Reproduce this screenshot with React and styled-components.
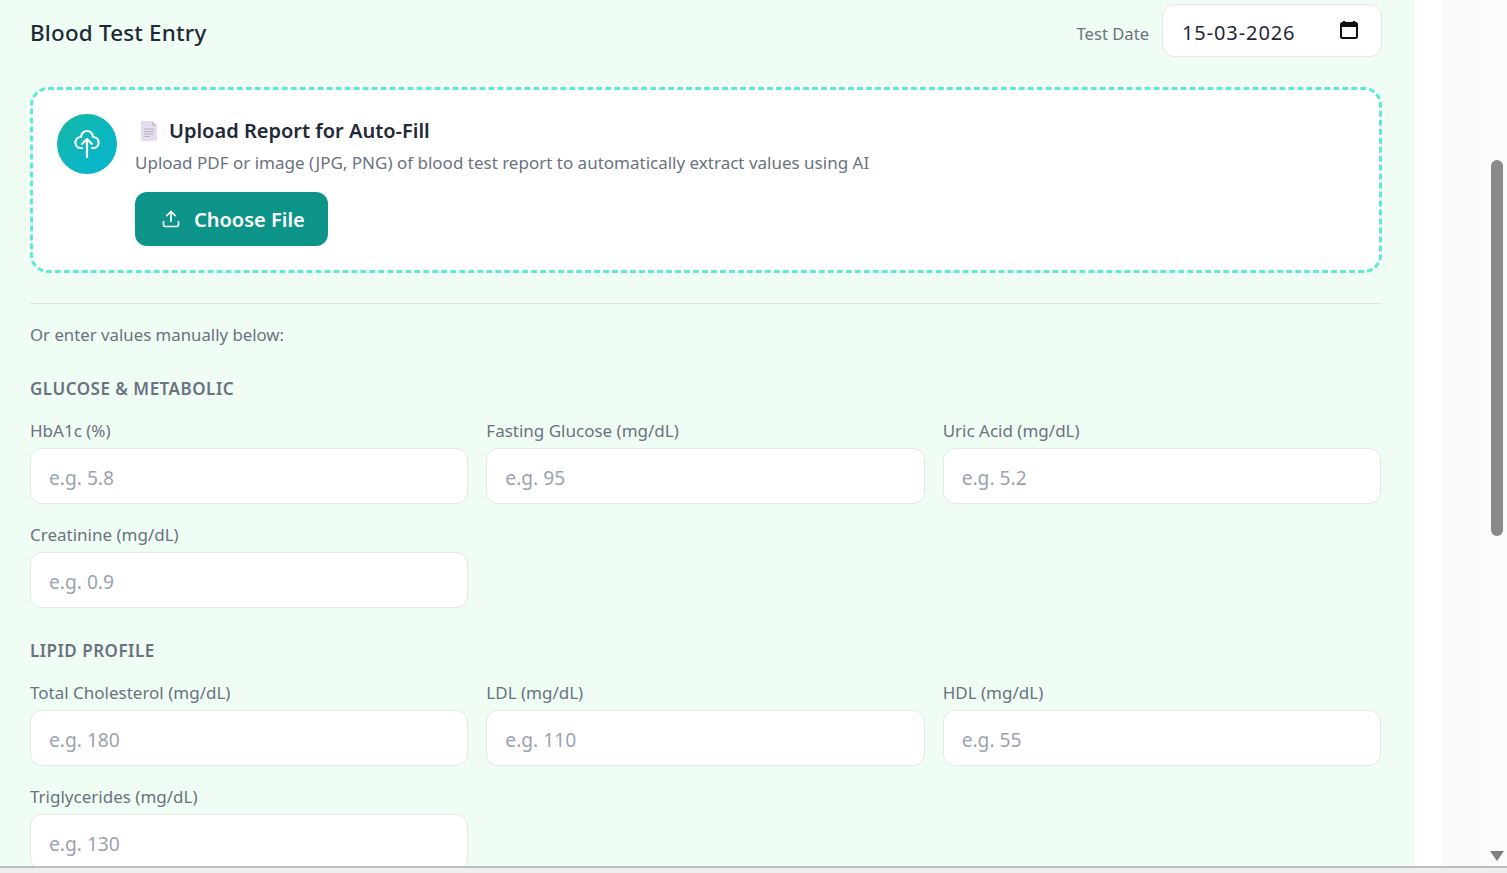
import styled, { createGlobalStyle } from "styled-components";
import { Upload } from "lucide-react";

const GlobalStyle = createGlobalStyle`
  html, body {
    margin: 0;
    padding: 0;
    height: 100%;
    overflow: hidden;
    font-family: "Noto Sans", "Open Sans", sans-serif;
  }
  * { box-sizing: border-box; }
`

const sections = [
  {
    title: "GLUCOSE & METABOLIC",
    fields: [
      { label: "HbA1c (%)", hint: "e.g. 5.8" },
      { label: "Fasting Glucose (mg/dL)", hint: "e.g. 95" },
      { label: "Uric Acid (mg/dL)", hint: "e.g. 5.2" },
      { label: "Creatinine (mg/dL)", hint: "e.g. 0.9" },
    ],
  },
  {
    title: "LIPID PROFILE",
    fields: [
      { label: "Total Cholesterol (mg/dL)", hint: "e.g. 180" },
      { label: "LDL (mg/dL)", hint: "e.g. 110" },
      { label: "HDL (mg/dL)", hint: "e.g. 55" },
      { label: "Triglycerides (mg/dL)", hint: "e.g. 130" },
    ],
  },
]

const DocIcon = () => (
  <svg width="18" height="22" viewBox="0 0 18 22">
    <path d="M1 1h11l5 5v15H1z" fill="#e4dcef" />
    <path d="M12 1l5 5h-5z" fill="#c9c2d4" />
    <path d="M4 9h10M4 11.5h10M4 14h10M4 16.5h6" stroke="#b9b3c2" strokeWidth="1" />
  </svg>
)

const CalendarIcon = () => (
  <CalendarSvg width="20" height="20" viewBox="0 0 20 20">
    <path d="M5 1v3M15 1v3" stroke="#111" strokeWidth="2.4" />
    <rect x="2" y="3" width="16" height="15" rx="1.5" fill="none" stroke="#111" strokeWidth="2" />
    <rect x="2" y="3" width="16" height="4" fill="#111" />
  </CalendarSvg>
)

const CloudIcon = () => (
  <svg width="30" height="30" viewBox="0 0 30 30" fill="none" stroke="#fff" strokeWidth="2.2" strokeLinecap="round" strokeLinejoin="round">
    <path d="M10 19H7.5A5.6 5.6 0 0 1 9 8A6 6 0 0 1 21 8A5.6 5.6 0 0 1 22.5 19H20" />
    <path d="M15 28V10M10 15l5-5 5 5" />
  </svg>
)

const App = () => {
  return (
    <>
      <GlobalStyle />
      <Page>
        <Columns>
          <Panel>
            <Header>
              <Title>Blood Test Entry</Title>
              <DateGroup>
                <DateLabel>Test Date</DateLabel>
                <DateBox>
                  <DateText>15-03-2026</DateText>
                  <CalendarIcon />
                </DateBox>
              </DateGroup>
            </Header>

            <UploadCard>
              <CloudBadge>
                <CloudIcon />
              </CloudBadge>
              <UploadBody>
                <UploadTitle>
                  <DocIcon />
                  Upload Report for Auto-Fill
                </UploadTitle>
                <UploadText>
                  Upload PDF or image (JPG, PNG) of blood test report to automatically extract values using AI
                </UploadText>
                <ChooseButton type="button">
                  <Upload size={20} strokeWidth={2} />
                  Choose File
                </ChooseButton>
              </UploadBody>
            </UploadCard>

            <Divider />
            <ManualNote>Or enter values manually below:</ManualNote>

            {sections.map((section) => (
              <Section key={section.title}>
                <SectionTitle>{section.title}</SectionTitle>
                <FieldGrid>
                  {section.fields.map((field) => (
                    <Field key={field.label}>
                      <FieldLabel>{field.label}</FieldLabel>
                      <FieldInput placeholder={field.hint} />
                    </Field>
                  ))}
                </FieldGrid>
              </Section>
            ))}
          </Panel>
          <Gutter />
          <SidePane />
          <ScrollTrack>
            <ScrollThumb />
            <ScrollArrow />
          </ScrollTrack>
        </Columns>
        <BottomEdge />
      </Page>
    </>
  )
}

const Page = styled.div`
  display: flex;
  flex-direction: column;
  height: 100vh;
  background: #fff;
`
const Columns = styled.div`
  flex: 1;
  min-height: 0;
  display: flex;
  overflow: hidden;
`
const Panel = styled.main`
  width: 1414px;
  flex-shrink: 0;
  padding: 4px 31px 0 30px;
  background: #effdf5;
  border-right: 1px solid #dcfce7;
  overflow: hidden;
`
const Gutter = styled.div`
  width: 29px;
  background: #fff;
`
const SidePane = styled.div`
  width: 43px;
  background: #f9fafb;
`
const ScrollTrack = styled.div`
  position: relative;
  flex: 1;
  background: #fbfbfb;
`
const ScrollThumb = styled.div`
  position: absolute;
  top: 160px;
  left: 5px;
  width: 12px;
  height: 376px;
  border-radius: 6px;
  background: #8a8a8a;
`
const ScrollArrow = styled.div`
  position: absolute;
  bottom: 5px;
  left: 4px;
  width: 0;
  height: 0;
  border-left: 7px solid transparent;
  border-right: 7px solid transparent;
  border-top: 10px solid #808080;
`
const BottomEdge = styled.div`
  height: 7px;
  flex-shrink: 0;
  border-top: 2px solid #bdbdbd;
  background: #efefef;
`
const Header = styled.header`
  display: flex;
  align-items: center;
  justify-content: space-between;
  height: 53px;
`
const Title = styled.h1`
  margin: 0;
  padding-top: 3px;
  font-size: 22.4px;
  font-weight: 500;
  letter-spacing: 0.2px;
  color: #1f2937;
`
const DateGroup = styled.div`
  display: flex;
  align-items: center;
  gap: 13px;
`
const DateLabel = styled.span`
  padding-top: 6px;
  font-size: 16.6px;
  color: #6b7280;
`
const DateBox = styled.div`
  display: flex;
  align-items: center;
  justify-content: space-between;
  width: 220px;
  height: 53px;
  padding: 0 22px 0 19px;
  background: #fff;
  border: 1px solid #e5e7eb;
  border-radius: 12px;
  font-size: 20px;
  color: #1f2937;
`
const DateText = styled.span`
  padding-top: 3px;
  letter-spacing: 0.9px;
`
const CalendarSvg = styled.svg`
  margin-bottom: 1px;
`
const UploadCard = styled.section`
  display: flex;
  gap: 18px;
  height: 186px;
  margin-top: 30px;
  padding: 24px;
  background: #fff;
  border: 3px dashed #5eead4;
  border-radius: 18px;
`
const CloudBadge = styled.div`
  display: flex;
  align-items: center;
  justify-content: center;
  width: 60px;
  height: 60px;
  flex-shrink: 0;
  border-radius: 50%;
  background: linear-gradient(135deg, #14b8a6, #06b6d4);
`
const UploadBody = styled.div`
  display: flex;
  flex-direction: column;
  align-items: flex-start;
`
const UploadTitle = styled.h3`
  display: flex;
  align-items: center;
  gap: 11px;
  margin: 2px 0 0;
  padding-left: 5px;
  font-size: 20px;
  line-height: 30px;
  font-weight: 600;
  color: #1f2937;
`
const UploadText = styled.p`
  margin: 4px 0 0;
  font-size: 17px;
  line-height: 26px;
  color: #6b7280;
`
const ChooseButton = styled.button`
  display: flex;
  align-items: center;
  gap: 13px;
  height: 54px;
  margin-top: 16px;
  padding: 0 23px 0 26px;
  border: 0;
  border-radius: 12px;
  background: #0d9488;
  color: #fff;
  font-family: inherit;
  font-size: 20px;
  font-weight: 600;
`
const Divider = styled.hr`
  margin: 30px 0 0;
  border: 0;
  border-top: 1px solid #dde5e1;
`
const ManualNote = styled.p`
  margin: 18px 0 0;
  font-size: 16.8px;
  line-height: 26px;
  color: #6b7280;
`
const Section = styled.section`
  margin-top: 28px;
  & + & { margin-top: 30px; }
`
const SectionTitle = styled.h4`
  margin: 0;
  font-size: 17px;
  line-height: 26px;
  font-weight: 600;
  letter-spacing: 0.5px;
  color: #6b7280;
`
const FieldGrid = styled.div`
  display: grid;
  grid-template-columns: repeat(3, 1fr);
  gap: 18px;
  margin-top: 16px;
  padding-right: 1px;
`
const Field = styled.div`
  display: flex;
  flex-direction: column;
  gap: 4px;
`
const FieldLabel = styled.label`
  font-size: 17px;
  line-height: 26px;
  color: #6b7280;
`
const FieldInput = styled.input`
  width: 100%;
  height: 56px;
  padding: 2px 18px 0;
  background: #fff;
  border: 1px solid #e5e7eb;
  border-radius: 12px;
  font-family: inherit;
  font-size: 19.2px;
  outline: none;
  &::placeholder { color: #9ca3af; opacity: 1; }
`

export default App
